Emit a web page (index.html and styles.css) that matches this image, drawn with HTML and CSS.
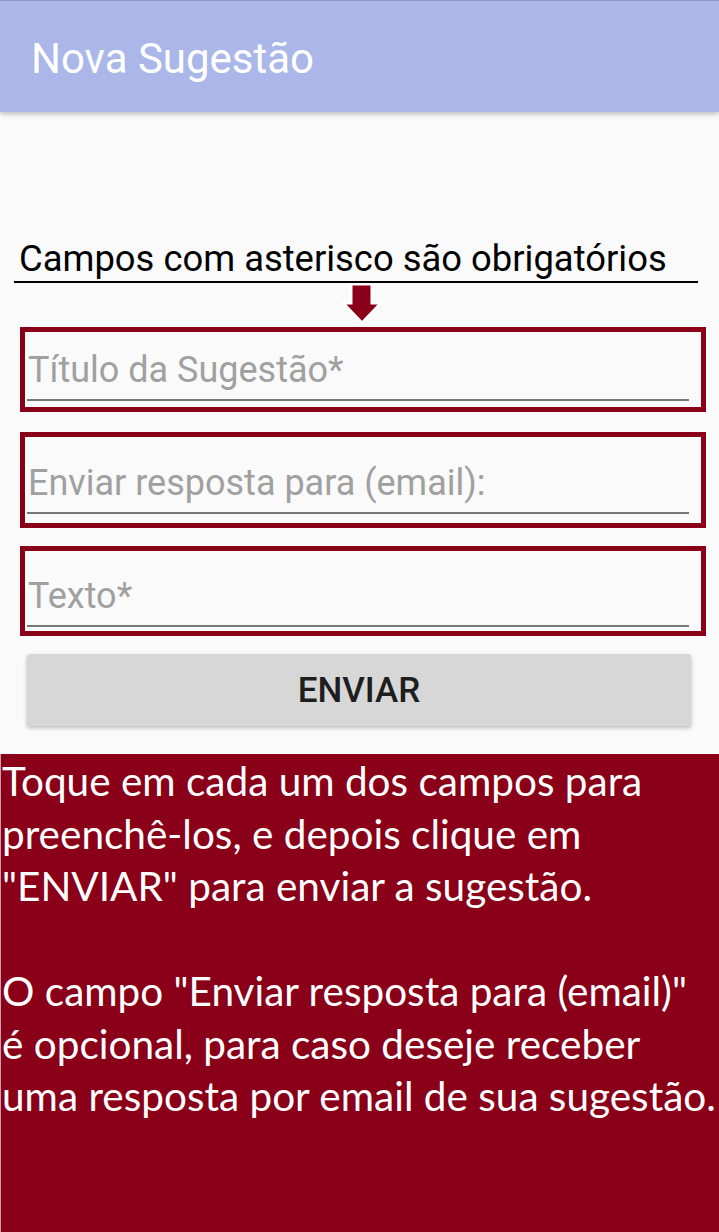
FILE: index.html
```html
<!DOCTYPE html>
<html lang="pt">
<head>
<meta charset="utf-8">
<title>Nova Sugestão</title>
<link rel="stylesheet" href="styles.css">
</head>
<body>
<div class="screen">
  <header class="appbar">
    <h1 class="appbar-title">Nova Sugestão</h1>
  </header>
  <main class="form">
    <div class="notice">Campos com asterisco são obrigatórios</div>
    <div class="arrow-row">
      <svg class="arrow" width="46" height="42" viewBox="0 0 46 42">
        <path d="M12 1 H33 V20 H42 L23 40 L4 20 H12 Z" fill="#8a0019" stroke="#ffffff" stroke-width="3" stroke-linejoin="miter"/>
      </svg>
    </div>
    <div class="field f1"><div class="input"><span class="placeholder">Título da Sugestão*</span></div></div>
    <div class="field f2"><div class="input"><span class="placeholder">Enviar resposta para (email):</span></div></div>
    <div class="field f3"><div class="input"><span class="placeholder">Texto*</span></div></div>
    <button class="send">ENVIAR</button>
  </main>
  <section class="help">
    <p>Toque em cada um dos campos para<br>preenchê-los, e depois clique em<br>"ENVIAR" para enviar a sugestão.</p>
    <p>O campo "Enviar resposta para (email)"<br>é opcional, para caso deseje receber<br>uma resposta por email de sua sugestão.</p>
  </section>
</div>
</body>
</html>
```
FILE: styles.css
```css
html, body {
  margin: 0;
  padding: 0;
  background: #fafafa;
}
.screen {
  width: 719px;
  height: 1232px;
  display: flex;
  flex-direction: column;
  overflow: hidden;
  font-family: Roboto, "Liberation Sans", sans-serif;
}
.appbar {
  height: 112px;
  background: #aab7e8;
  border-top: 1px solid #8e9bd0;
  box-sizing: border-box;
  box-shadow: 0 2px 5px rgba(0,0,0,0.25);
  display: flex;
  align-items: center;
  padding-left: 31px;
  position: relative;
  z-index: 1;
}
.appbar-title {
  margin: 0;
  color: #ffffff;
  font-weight: 400;
  font-size: 42px;
  line-height: 1;
  padding-top: 4px;
}
.form {
  display: flex;
  flex-direction: column;
  padding-top: 125px;
  padding-left: 14px;
  padding-right: 21px;
}
.notice {
  font-size: 36.4px;
  color: #000;
  line-height: 44px;
  padding-left: 5px;
  border-bottom: 2px solid #000;
  white-space: nowrap;
}
.arrow-row {
  display: flex;
  justify-content: center;
  height: 44px;
  padding-left: 12px;
}
.arrow {
  display: block;
  margin-top: 0;
}
.field {
  border: 5px solid #8a0019;
  margin-left: 6px;
  margin-right: -8px;
  background: #fafafa;
  box-sizing: border-box;
  display: flex;
  flex-direction: column;
  justify-content: flex-end;
  padding: 0 12px 6px 2px;
}
.f1 { height: 85px; }
.f2 { height: 96px; margin-top: 20px; padding-bottom: 9px; }
.f3 { height: 90px; margin-top: 18px; padding-bottom: 4px; }
.input {
  border-bottom: 2px solid #777;
  padding-left: 1px;
  padding-bottom: 9px;
}
.placeholder {
  font-size: 36px;
  color: #a0a0a0;
  line-height: 40px;
  display: block;
  white-space: nowrap;
}
.send {
  margin: 18px 0 0 13px;
  width: 664px;
  height: 72px;
  border: none;
  border-radius: 3px;
  background: #d7d7d7;
  box-shadow: 0 2px 4px rgba(0,0,0,0.25);
  font-family: Roboto, "Liberation Sans", sans-serif;
  font-weight: 500;
  font-size: 35px;
  color: #1e1e1e;
  padding: 0;
}
.help {
  margin-top: 28px;
  flex: 1;
  background: #8a0019;
  border-left: 1px solid #c9a0a8;
  color: #ffffff;
  font-family: Lato, "Open Sans", sans-serif;
  font-size: 40.5px;
  line-height: 52.5px;
  padding: 1px 0 0 1px;
  white-space: nowrap;
}
.help p {
  margin: 0 0 52.5px 0;
}
```
